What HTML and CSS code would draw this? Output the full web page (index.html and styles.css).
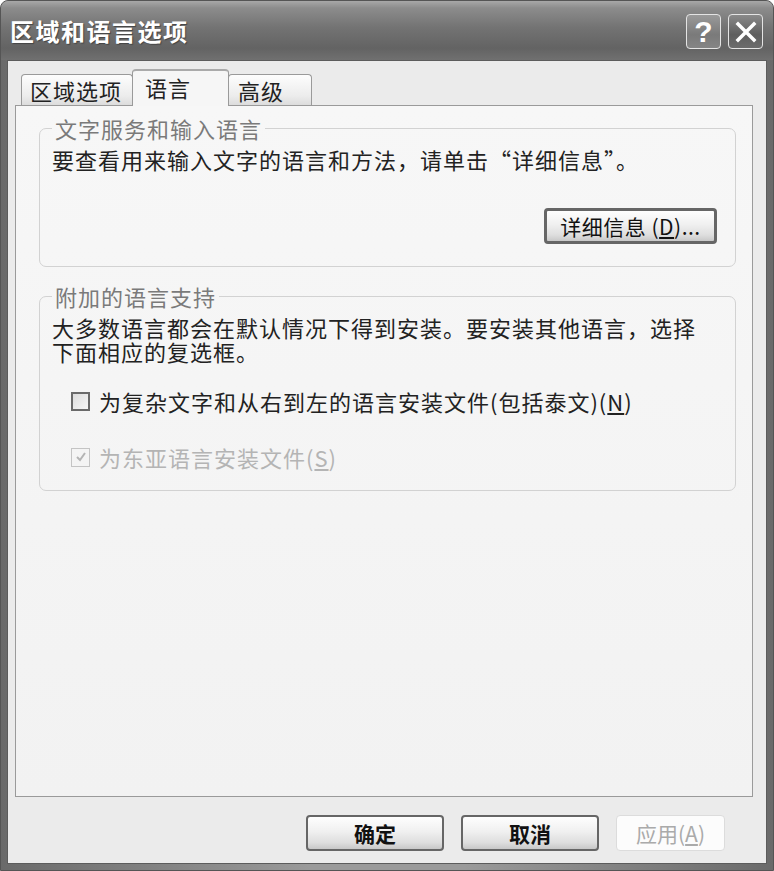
FILE: index.html
```html
<!DOCTYPE html>
<html>
<head>
    <title>区域和语言选项</title>
    <link rel="stylesheet" href="styles.css">
</head>
<body>
    <div class="window">
        <div class="titlebar">
            <span class="title">区域和语言选项</span>
            <div class="caption-buttons">
                <span class="cap-btn help">?</span>
                <span class="cap-btn close">
                    <svg width="24" height="24" viewBox="0 0 24 24">
                        <path d="M4 4 L20 20 M20 4 L4 20" stroke="#fff" stroke-width="3.5" stroke-linecap="square" fill="none"/>
                    </svg>
                </span>
            </div>
        </div>
        <div class="frame">
            <div class="client">
                <div class="tabs">
                    <div class="tab tab-region">区域选项</div>
                    <div class="tab tab-lang active">语言</div>
                    <div class="tab tab-adv">高级</div>
                </div>
                <div class="panel">
                    <fieldset class="group group-text">
                        <legend>文字服务和输入语言</legend>
                        <p class="group-note">要查看用来输入文字的语言和方法，请单击“详细信息”。</p>
                        <div class="group-actions">
                            <button class="btn btn-details">详细信息 (<u>D</u>)...</button>
                        </div>
                    </fieldset>
                    <fieldset class="group group-extra">
                        <legend>附加的语言支持</legend>
                        <p class="group-note">大多数语言都会在默认情况下得到安装。要安装其他语言，选择<br>下面相应的复选框。</p>
                        <label class="check">
                            <span class="box"></span>
                            <span>为复杂文字和从右到左的语言安装文件(包括泰文)(<u>N</u>)</span>
                        </label>
                        <label class="check disabled">
                            <span class="box">
                                <svg width="14" height="14" viewBox="0 0 14 14">
                                    <path d="M3 7 L6 10 L11 3" stroke="#b4b4b4" stroke-width="2" fill="none"/>
                                </svg>
                            </span>
                            <span>为东亚语言安装文件(<u>S</u>)</span>
                        </label>
                    </fieldset>
                </div>
                <div class="footer">
                    <button class="btn btn-ok">确定</button>
                    <button class="btn btn-cancel">取消</button>
                    <button class="btn btn-apply" disabled>应用(<u>A</u>)</button>
                </div>
            </div>
        </div>
    </div>
</body>
</html>
```

FILE: styles.css
```css
body {
    margin: 0;
    padding: 0;
    background: #fff;
    font-family: "Noto Sans CJK SC", "Liberation Sans", sans-serif;
}

.window {
    width: 774px;
    height: 871px;
    box-sizing: border-box;
    display: flex;
    flex-direction: column;
    background: #7a7a7a;
    border: 1px solid #555;
    border-radius: 8px 8px 0 0;
    overflow: hidden;
}

.titlebar {
    height: 59px;
    display: flex;
    align-items: center;
    justify-content: space-between;
    padding: 0 10px 0 9px;
    background: linear-gradient(#a8a8a8 0%, #8c8c8c 12%, #737373 45%, #636363 80%, #707070 100%);
}

.title {
    color: #fff;
    font-size: 24px;
    font-weight: bold;
    letter-spacing: 1.5px;
    text-shadow: 1px 1px 1px #444;
}

.caption-buttons {
    display: flex;
    gap: 7px;
    margin-top: 2px;
}

.cap-btn {
    width: 35px;
    height: 35px;
    box-sizing: border-box;
    display: flex;
    align-items: center;
    justify-content: center;
    border: 1.5px solid #e4e4e4;
    border-radius: 4px;
    background: linear-gradient(#9a9a9a, #7a7a7a 60%, #858585);
    color: #fff;
    font-family: "Liberation Sans", sans-serif;
    font-size: 30px;
    font-weight: bold;
}

.cap-btn.close {
    background: linear-gradient(#8a8a8a, #5e5e5e 60%, #6c6c6c);
}

.frame {
    flex: 1;
    display: flex;
    padding: 0 6px 6px 6px;
    background: linear-gradient(90deg, #6a6a6a, #9a9a9a 40%, #9a9a9a 60%, #6a6a6a);
}

.client {
    flex: 1;
    display: flex;
    flex-direction: column;
    background: #ebebeb;
    border: 1px solid #5c5c5c;
    padding-top: 8px;
}

.tabs {
    height: 36px;
    display: flex;
    align-items: flex-end;
    padding-left: 13px;
    position: relative;
    z-index: 1;
}

.tab {
    height: 31px;
    box-sizing: border-box;
    border: 1px solid #9a9a9a;
    border-bottom: none;
    border-radius: 4px 4px 0 0;
    background: linear-gradient(#fdfdfd, #ececec 70%, #dcdcdc);
    font-size: 22px;
    line-height: 30px;
    letter-spacing: 1px;
    color: #222;
    padding-left: 8px;
}

.tab-region {
    width: 112px;
}

.tab-lang {
    width: 97px;
    padding-left: 12px;
}

.tab-adv {
    width: 84px;
    padding-left: 9px;
    margin-left: -1px;
}

.tab.active {
    height: 37px;
    margin: 0 0 -1px -1px;
    background: #f6f6f6;
    border-top: 2px solid #aaa;
    line-height: 32px;
}

.panel {
    flex: 1;
    margin: 0 13px 0 7px;
    border: 1px solid #9a9a9a;
    background: linear-gradient(#f7f7f7, #f2f2f2);
    padding: 10px 16px 0 23px;
    display: flex;
    flex-direction: column;
    gap: 17px;
}

.group {
    margin: 0;
    border: 1px solid #d2d2d2;
    border-radius: 7px;
    padding: 0 18px 0 12px;
    font-size: 22px;
    letter-spacing: 1px;
    color: #222;
}

.group legend {
    color: #7a7a7a;
    padding: 0 3px;
    line-height: 24px;
}

.group-note {
    margin: 7px 0 0 0;
    line-height: 24px;
}

.group-actions {
    display: flex;
    justify-content: flex-end;
    margin-top: 37px;
    margin-bottom: 22px;
}

.btn {
    box-sizing: border-box;
    height: 36px;
    border: 2px solid #666;
    border-radius: 4px;
    background: linear-gradient(#fefefe, #f0f0f0 45%, #dedede 80%, #c8c8c8);
    font-family: "Noto Sans CJK SC", sans-serif;
    font-size: 21px;
    color: #111;
    padding: 0;
}

.btn-details {
    width: 173px;
    border-width: 3px;
    letter-spacing: 0.5px;
}

.check {
    display: flex;
    align-items: center;
    gap: 9px;
    margin-left: 19px;
}

.group-extra .check {
    margin-top: 22px;
}

.group-extra .check.disabled {
    margin-top: 24px;
    margin-bottom: 17px;
    color: #b4b4b4;
}

.box {
    width: 19px;
    height: 19px;
    box-sizing: border-box;
    border: 2px solid #6a6a6a;
    background: linear-gradient(135deg, #dcdcdc, #f6f6f6);
    display: flex;
    align-items: center;
    justify-content: center;
}

.check.disabled .box {
    border: 1.5px solid #c4c4c4;
    background: #f4f4f4;
}

.footer {
    height: 66px;
    box-sizing: border-box;
    display: flex;
    justify-content: flex-end;
    align-items: flex-start;
    gap: 17px;
    padding: 18px 41px 0 0;
}

.btn-ok,
.btn-cancel {
    width: 138px;
    font-weight: bold;
}

.btn-apply {
    width: 109px;
    background: #fcfcfc;
    border: 1px solid #dcdcdc;
    color: #aaa;
}
```
